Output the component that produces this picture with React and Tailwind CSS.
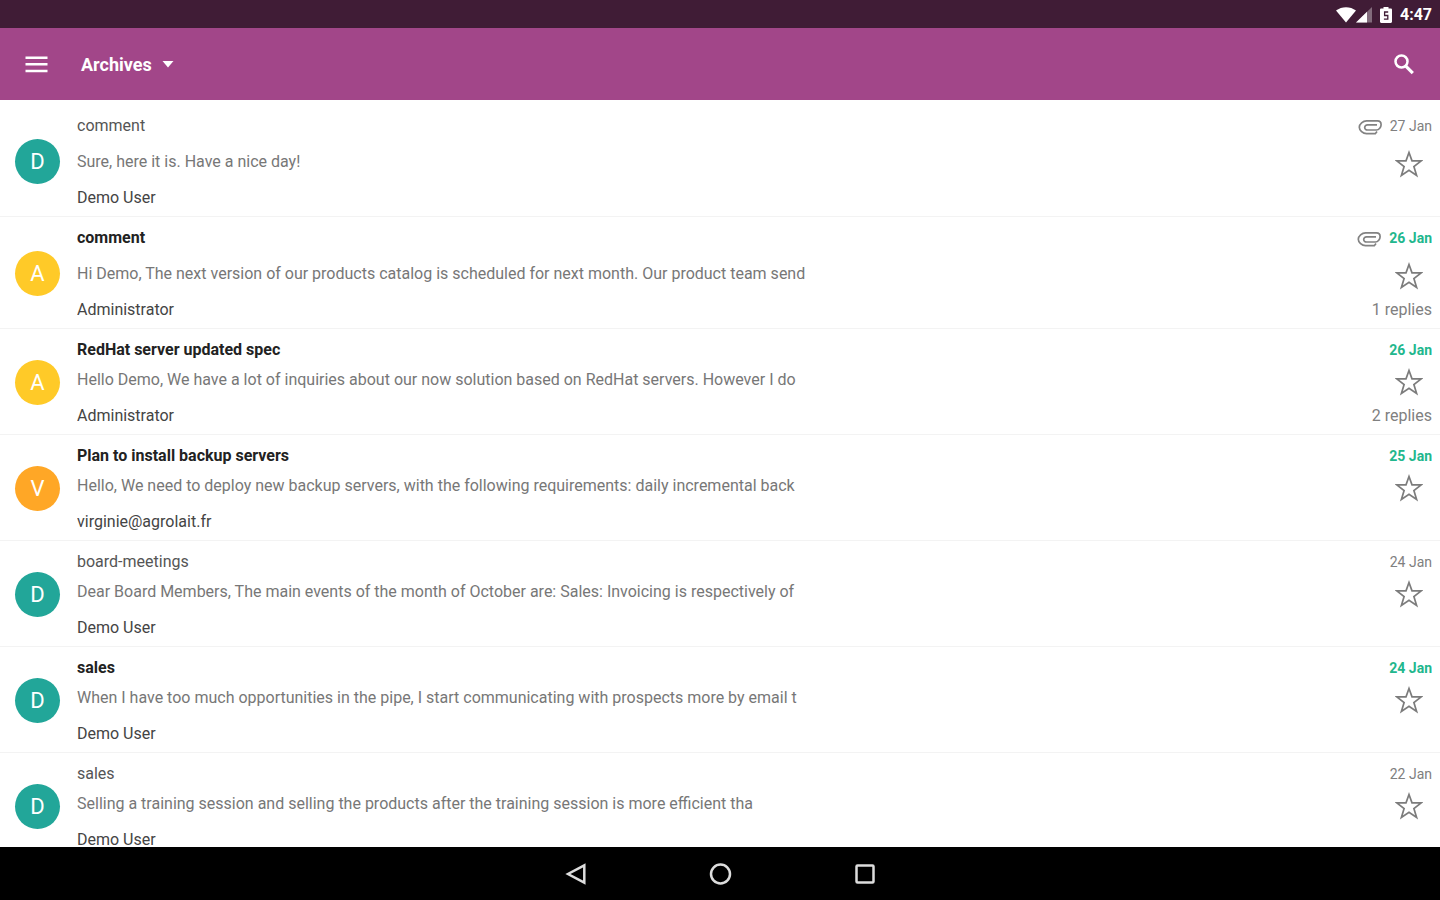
const messages = [
  { id: 1, initial: 'D', color: 'bg-[#22a699]', subject: 'comment', preview: 'Sure, here it is. Have a nice day!', author: 'Demo User', date: '27 Jan', attachment: true },
  { id: 2, initial: 'A', color: 'bg-[#ffca28]', subject: 'comment', preview: 'Hi Demo, The next version of our products catalog is scheduled for next month. Our product team send', author: 'Administrator', date: '26 Jan', attachment: true, unread: true, replies: 1 },
  { id: 3, initial: 'A', color: 'bg-[#ffca28]', subject: 'RedHat server updated spec', preview: 'Hello Demo, We have a lot of inquiries about our now solution based on RedHat servers. However I do', author: 'Administrator', date: '26 Jan', unread: true, replies: 2 },
  { id: 4, initial: 'V', color: 'bg-[#ffa726]', subject: 'Plan to install backup servers', preview: 'Hello, We need to deploy new backup servers, with the following requirements: daily incremental back', author: 'virginie@agrolait.fr', date: '25 Jan', unread: true },
  { id: 5, initial: 'D', color: 'bg-[#22a699]', subject: 'board-meetings', preview: 'Dear Board Members, The main events of the month of October are: Sales: Invoicing is respectively of', author: 'Demo User', date: '24 Jan' },
  { id: 6, initial: 'D', color: 'bg-[#22a699]', subject: 'sales', preview: 'When I have too much opportunities in the pipe, I start communicating with prospects more by email t', author: 'Demo User', date: '24 Jan', unread: true },
  { id: 7, initial: 'D', color: 'bg-[#22a699]', subject: 'sales', preview: 'Selling a training session and selling the products after the training session is more efficient tha', author: 'Demo User', date: '22 Jan' },
];

function StatusBar() {
  return (
    <div className="flex h-7 shrink-0 items-center justify-end bg-[#401c36] pt-0.5 pr-2 text-white">
      <svg className="h-4 w-5" viewBox="0 0 20 16" fill="currentColor" aria-hidden="true">
        <path d="M0 3.6C5.8-.9 14.2-.9 20 3.6L10 15.6z" />
      </svg>
      <svg className="h-4 w-4" viewBox="0 0 16 16" fill="currentColor" aria-hidden="true">
        <path d="M0 15.5 16 0v15.5z" opacity=".35" />
        <path d="M0 15.5 11 4.8v10.7z" />
      </svg>
      <svg className="ml-2 h-4 w-3" viewBox="0 0 12 16" aria-hidden="true">
        <path d="M3.5 0h5v1.6h2.3c.6 0 1.2.5 1.2 1.2v12c0 .7-.6 1.2-1.2 1.2H1.2C.6 16 0 15.5 0 14.8v-12c0-.7.6-1.2 1.2-1.2h2.3z" fill="#fff" />
        <path d="M8.2 5H4.600v3.500h3.200v3.700H3.900" fill="none" stroke="#401c36" strokeWidth="1.3" />
      </svg>
      <time className="ml-2 text-base font-bold leading-4">4:47</time>
    </div>
  );
}

function AppBar() {
  return (
    <header className="flex h-18 shrink-0 items-center bg-[#a24689] px-6 pt-0.5 text-white">
      <button type="button" aria-label="Open menu" className="flex size-6 items-center justify-center">
        <svg className="size-6 shrink-0" viewBox="0 0 24 24" fill="currentColor" aria-hidden="true">
          <path d="M1.5 3.500h22v2.500h-22zM1.500 10.100h22v2.500h-22zM1.500 16.700h22v2.500h-22z" />
        </svg>
      </button>
      <button type="button" aria-haspopup="menu" className="ml-[33px] flex items-center gap-[10px] text-lg font-bold">
        Archives
        <svg className="h-2 w-3" viewBox="0 0 12 8" fill="currentColor" aria-hidden="true">
          <path d="M.5 0h11L6 6.500z" />
        </svg>
      </button>
      <button type="button" aria-label="Search" className="ml-auto flex size-6 items-center justify-center">
        <svg className="size-6 shrink-0" viewBox="0 0 24 24" fill="none" stroke="currentColor" aria-hidden="true">
          <circle cx="9.5" cy="8.500" r="6" strokeWidth="2.5" />
          <path d="m13.800 13.100 7 7" strokeWidth="3.2" />
        </svg>
      </button>
    </header>
  );
}

function Paperclip() {
  return (
    <svg className="mt-0.5 h-4 w-6" viewBox="0 0 24 16" fill="none" stroke="#828282" strokeWidth="1.7" role="img" aria-label="Has attachment">
      <path d="M19 12.400 17.300 14.700H8.500C5 14.700 1.300 11.500 1.300 8.300S5 1.900 8.500 1.900h11c2 0 3.600 1.600 3.600 3.800s-2.100 5.300-4.600 5.300H9.500c-1.600 0-2.800-1-2.800-2.500s1.200-2.700 2.800-2.700H19" />
    </svg>
  );
}

function Message({ message }) {
  const { initial, color, subject, preview, author, date, attachment, unread, replies } = message;
  return (
    <li className="flex items-stretch border-b border-[#f3f3f3] pt-[9px] pr-2 pb-[6px] pl-[15px]">
      <span className={`mb-0.5 flex size-[45px] shrink-0 items-center justify-center self-center rounded-full text-[22px] text-white ${color}`}>
        {initial}
      </span>
      <div className="ml-[17px] flex min-w-0 flex-1 flex-col gap-3 text-base leading-6">
        <div className={attachment ? 'flex flex-col gap-3' : 'flex flex-col gap-[6px]'}>
          <h2 className={unread ? 'truncate font-bold text-[#222]' : 'truncate text-[#555]'}>{subject}</h2>
          <p className="truncate text-[#777]">{preview}</p>
        </div>
        <p className="truncate text-[#444]">{author}</p>
      </div>
      <div className="flex shrink-0 flex-col items-end gap-2 text-[#808080]">
        <div className={attachment ? 'flex flex-col items-end gap-3' : 'flex flex-col items-end gap-[6px]'}>
          <div className="flex items-center gap-2 text-sm leading-6">
            {attachment && <Paperclip />}
            <time className={unread ? 'font-bold text-[#22b78d]' : ''}>{date}</time>
          </div>
          <button type="button" aria-label={`Star ${subject}`} className="mr-[9px] flex size-7 items-center justify-center">
            <svg className="size-7 shrink-0" viewBox="0 0 28 28" fill="none" stroke="#7c7c7c" strokeWidth="1.7" aria-hidden="true">
              <path d="m14 2.500 3 8.300 9.200.1-7.300 5.600 2.700 9L14 20.200l-7.600 5.300 2.700-9-7.300-5.600 9.200-.1z" />
            </svg>
          </button>
        </div>
        {replies && <p className="text-base leading-6">{replies} replies</p>}
      </div>
    </li>
  );
}

function NavigationBar() {
  return (
    <nav aria-label="System" className="flex h-[53px] shrink-0 items-center justify-center bg-black text-[#ddd]">
      <button type="button" aria-label="Back" className="flex w-36 justify-center">
        <svg className="size-6" viewBox="0 0 24 24" fill="none" stroke="currentColor" strokeWidth="2.5" aria-hidden="true">
          <path d="M20.300 3.300v17.400L4 12z" />
        </svg>
      </button>
      <button type="button" aria-label="Home" className="flex w-36 justify-center">
        <svg className="size-6" viewBox="0 0 24 24" fill="none" stroke="currentColor" strokeWidth="2.5" aria-hidden="true">
          <circle cx="12.500" cy="12" r="9.500" />
        </svg>
      </button>
      <button type="button" aria-label="Recent apps" className="flex w-36 justify-center">
        <svg className="size-6" viewBox="0 0 24 24" fill="none" stroke="currentColor" strokeWidth="2.5" aria-hidden="true">
          <rect x="4.500" y="3.500" width="17" height="17" rx="1" />
        </svg>
      </button>
    </nav>
  );
}

export default function App() {
  return (
    <div className="flex h-screen flex-col bg-white font-['Roboto',sans-serif]">
      <StatusBar />
      <AppBar />
      <main className="min-h-0 flex-1 overflow-hidden pt-[5px]">
        <ul>
          {messages.map((message) => (
            <Message key={message.id} message={message} />
          ))}
        </ul>
      </main>
      <NavigationBar />
    </div>
  );
}
